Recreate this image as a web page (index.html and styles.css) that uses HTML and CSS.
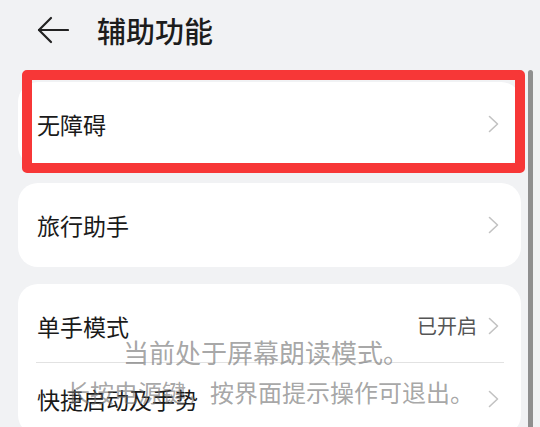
FILE: index.html
```html
<!DOCTYPE html>
<html lang="zh-CN">
<head>
<meta charset="utf-8">
<link rel="stylesheet" href="styles.css">
</head>
<body>
<div class="page">
  <header class="header">
    <svg class="back" width="32" height="28" viewBox="0 0 32 28" fill="none" stroke="#222" stroke-width="2.2" stroke-linecap="round" stroke-linejoin="round">
      <path d="M2 14 H31"/>
      <path d="M14 2 L2 14 L14 26"/>
    </svg>
    <h1 class="title">辅助功能</h1>
  </header>
  <main class="list">
    <section class="card card-hl">
      <div class="row">
        <span class="label">无障碍</span>
        <svg class="chev" width="11" height="18" viewBox="0 0 11 18" fill="none" stroke="#c2c2c2" stroke-width="1.6" stroke-linecap="round" stroke-linejoin="round"><path d="M1.5 1.5 L9.5 9 L1.5 16.5"/></svg>
      </div>
      <div class="highlight"></div>
    </section>
    <section class="card">
      <div class="row">
        <span class="label">旅行助手</span>
        <svg class="chev" width="11" height="18" viewBox="0 0 11 18" fill="none" stroke="#c2c2c2" stroke-width="1.6" stroke-linecap="round" stroke-linejoin="round"><path d="M1.5 1.5 L9.5 9 L1.5 16.5"/></svg>
      </div>
    </section>
    <section class="card card-multi">
      <div class="row row-sm">
        <span class="label">单手模式</span>
        <span class="right"><span class="value">已开启</span>
        <svg class="chev" width="11" height="18" viewBox="0 0 11 18" fill="none" stroke="#c2c2c2" stroke-width="1.6" stroke-linecap="round" stroke-linejoin="round"><path d="M1.5 1.5 L9.5 9 L1.5 16.5"/></svg></span>
      </div>
      <div class="divider"></div>
      <div class="row row-sm">
        <span class="label">快捷启动及手势</span>
        <svg class="chev" width="11" height="18" viewBox="0 0 11 18" fill="none" stroke="#c2c2c2" stroke-width="1.6" stroke-linecap="round" stroke-linejoin="round"><path d="M1.5 1.5 L9.5 9 L1.5 16.5"/></svg>
      </div>
    </section>
  </main>
  <div class="scrollbar"></div>
  <div class="toast">
    <div class="toast-l1">当前处于屏幕朗读模式。</div>
    <div class="toast-l2">长按电源键，按界面提示操作可退出。</div>
  </div>
</div>
</body>
</html>
```

FILE: styles.css
```css
html, body {
  margin: 0;
  padding: 0;
}
body {
  background: #f1f2f4;
  font-family: "Noto Sans CJK SC", "Noto Sans", sans-serif;
  color: #1a1a1a;
}
.page {
  position: relative;
  width: 540px;
  height: 427px;
  overflow: hidden;
}
.header {
  height: 60px;
  display: flex;
  align-items: center;
  padding-left: 37px;
  gap: 28px;
}
.back {
  display: block;
}
.title {
  margin: 0;
  font-size: 29px;
  font-weight: 500;
  color: #1c1c1c;
  line-height: 1;
}
.list {
  padding: 22px 19px 0 18px;
  display: flex;
  flex-direction: column;
  gap: 17px;
}
.card {
  position: relative;
  background: #ffffff;
  border-radius: 20px;
}
.row {
  height: 84px;
  display: flex;
  align-items: center;
  justify-content: space-between;
  padding: 0 22px 0 19px;
}
.label {
  font-size: 23px;
  line-height: 1;
}
.chev {
  display: block;
  flex: none;
}
.highlight {
  position: absolute;
  left: 4px;
  right: -4px;
  top: -12px;
  bottom: -7px;
  border: 10px solid #f73737;
  border-radius: 5px;
}
.card-multi {
  padding-top: 6px;
}
.row-sm {
  height: 72px;
}
.right {
  display: flex;
  align-items: center;
  gap: 11px;
}
.value {
  font-size: 20px;
  color: #555555;
  line-height: 1;
}
.divider {
  height: 1px;
  background: #e2e2e2;
  margin: 0 17px 0 18px;
}
.scrollbar {
  position: absolute;
  left: 528px;
  top: 70px;
  width: 5px;
  bottom: 0;
  background: #8f8f8f;
  border-radius: 3px 3px 0 0;
}
.toast {
  position: absolute;
  left: 0;
  right: 0;
  top: 332px;
  text-align: center;
  color: rgba(110, 110, 110, 0.62);
  line-height: 40px;
  pointer-events: none;
}
.toast-l1 {
  font-size: 26px;
  padding-right: 8px;
}
.toast-l2 {
  font-size: 24px;
}
```
